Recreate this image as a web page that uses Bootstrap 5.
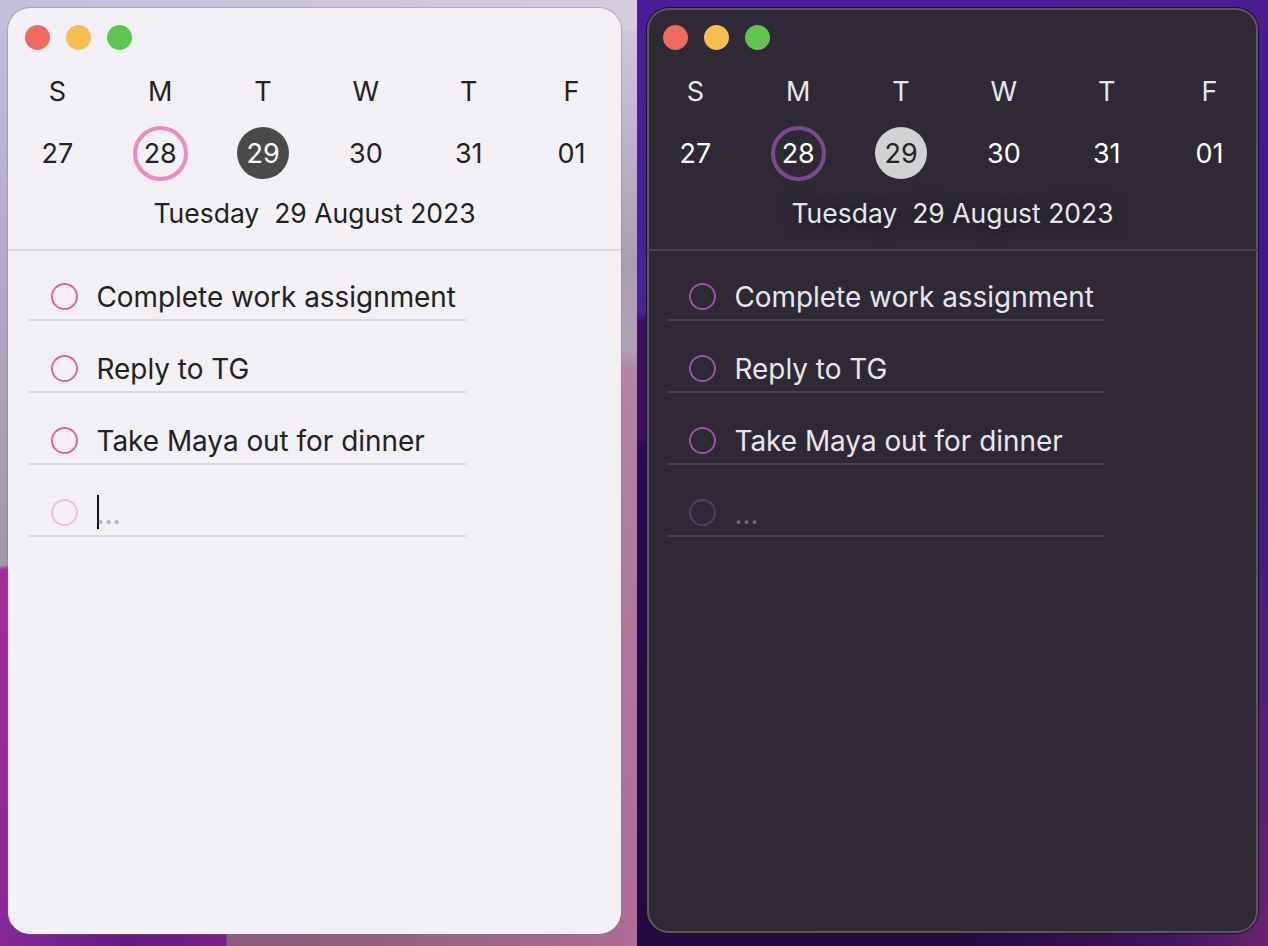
<!DOCTYPE html>
<html lang="en">
<head>
<meta charset="UTF-8">
<title>Calendar tasks</title>
<link href="https://cdn.jsdelivr.net/npm/bootstrap@5.3.0/dist/css/bootstrap.min.css" rel="stylesheet">
<style>
html, body { height: 100%; }
body { font-family: Inter, "Liberation Sans", sans-serif; background: #2a0f58; overflow: hidden; }
.stage { height: 946px; }
.pane { height: 946px; background-repeat: no-repeat; }
.pane-light {
    width: 637px;
    padding: 8px 16px 12px 8px;
    background-image:
        linear-gradient(90deg, #c2bfd9, #d6ccde),
        linear-gradient(90deg, #86289a 0%, #641a80 20%, #6e1c84 28%, #7c2088 35.5%, #8a5c80 35.6%, #93607f 60%, #b06a98 100%),
        linear-gradient(172deg, #c2bfd9 0%, #b3a9c4 30%, #a595a9 58%, #a595a9 59.5%, #a32c96 60%, #9a2a9c 75%, #86289a 100%),
        linear-gradient(180deg, #d6ccde 0%, #aa9db2 28%, #b2a0b8 37%, #b583a4 39%, #ae7aa0 60%, #b06a98 100%);
    background-size: 100% 30px, 100% 30px, 30px 100%, 30px 100%;
    background-position: 0 0, 0 bottom, 0 0, right 0 top 0;
}
.pane-dark {
    width: 631px;
    padding: 8px 10px 13px 10px;
    background-image:
        linear-gradient(90deg, #4a1c9c, #4a1c98 60%, #4a1c90),
        linear-gradient(90deg, #26093f 0%, #23093f 50%, #40155f 85%, #6a2270 100%),
        linear-gradient(180deg, #4a1c9c 0%, #4a2390 33%, #3e1064 34%, #3c0f60 46%, #2a0a50 48%, #26093f 100%),
        linear-gradient(180deg, #47199a 0%, #3e1a88 45%, #4a1f7c 70%, #6a2270 100%);
    background-size: 100% 30px, 100% 30px, 30px 100%, 30px 100%;
    background-position: 0 0, 0 bottom, 0 0, right 0 top 0;
}
.win { height: 100%; border-radius: 22px; display: flex; flex-direction: column; overflow: hidden; }
.win-light { background: #f2f0f4; color: #222; box-shadow: 0 0 0 1px rgba(120,110,130,.35); }
.win-dark { background: #2e2935; color: #e8e6ea; box-shadow: inset 0 0 0 2px #5a5760, 0 0 0 1px #1a1420; }
.lights { padding: 17px 17px 0; }
.win-dark .lights { padding-left: 16px; }
.tl { width: 25px; height: 25px; border-radius: 50%; }
.tl-r { background: #ee6a5f; }
.tl-y { background: #f5bf4f; }
.tl-g { background: #61c554; }
.wk { margin: 24px -2px 0; font-size: 27px; line-height: 36px; }
.dt { margin: 15px -2px 0; font-size: 27px; line-height: 54px; height: 56px; }
.win-dark .wk { margin: 24px -3px 0; }
.win-dark .dt { margin: 15px -3px 0; color: #fff; }
.dt .col > div { padding-top: 2px; }
.dy { width: 55px; height: 55px; border-radius: 50%; }
.dy-ring-l { border: 4px solid #ec8bbd; }
.dy-ring-d { border: 4px solid #7a4a8c; color: #fff; }
.dy-sel-l { width: 52px; height: 52px; background: #4a4a4a; color: #fff; }
.dy-sel-d { width: 52px; height: 52px; background: #d2d2d4; color: #222; }
.datel { margin-top: 14px; font-size: 26.5px; line-height: 36px; padding-bottom: 18px; }
.win-light .datel { text-shadow: 0 2px 14px rgba(255,255,255,.6); }
.win-dark .datel { text-shadow: 0 2px 14px rgba(0,0,0,.55); }
.hr-l { border-bottom: 2px solid #dcdadf; }
.hr-d { border-bottom: 2px solid #47434d; }
.tasks { padding: 0 0 0 21px; }
.win-dark .tasks { padding-left: 20px; }
.tk { width: 437px; height: 72px; display: flex; align-items: center; padding: 24px 0 0 22px; gap: 18.5px; border-bottom: 2px solid #dcdadf; font-size: 27.9px; white-space: nowrap; }
.tk:first-child { height: 70px; padding-top: 22px; }
.win-dark .tk { border-bottom-color: #47434d; }
.tk-c { width: 27px; height: 27px; border-radius: 50%; flex: none; border: 2.5px solid #e85fa5; }
.win-dark .tk-c { border-color: #9a54a8; }
.tk-new .tk-c { border-color: #f3bcd8; }
.win-dark .tk-new .tk-c { border-color: #5a3a68; }
.tk-t { padding-top: 4px; }
.tk-ph { color: #b5b3b8; padding-top: 6px; }
.win-dark .tk-ph { color: #6c6872; }
.caret-bar { width: 2px; height: 34px; background: #111; margin-right: -2px; }
</style>
</head>
<body>
<div class="stage d-flex">

    <div class="pane pane-light">
        <div class="win win-light">
            <div class="lights d-flex gap-3">
                <div class="tl tl-r"></div><div class="tl tl-y"></div><div class="tl tl-g"></div>
            </div>
            <div class="hr-l">
                <div class="row g-0 text-center wk">
                    <div class="col">S</div><div class="col">M</div><div class="col">T</div>
                    <div class="col">W</div><div class="col">T</div><div class="col">F</div>
                </div>
                <div class="row g-0 text-center dt">
                    <div class="col d-flex justify-content-center align-items-center"><div>27</div></div>
                    <div class="col d-flex justify-content-center align-items-center"><div class="dy dy-ring-l d-flex justify-content-center align-items-center">28</div></div>
                    <div class="col d-flex justify-content-center align-items-center"><div class="dy dy-sel-l d-flex justify-content-center align-items-center">29</div></div>
                    <div class="col d-flex justify-content-center align-items-center"><div>30</div></div>
                    <div class="col d-flex justify-content-center align-items-center"><div>31</div></div>
                    <div class="col d-flex justify-content-center align-items-center"><div>01</div></div>
                </div>
                <div class="datel text-center">Tuesday&nbsp;&nbsp;29 August 2023</div>
            </div>
            <div class="tasks">
                <div class="tk"><span class="tk-c"></span><span class="tk-t">Complete work assignment</span></div>
                <div class="tk"><span class="tk-c"></span><span class="tk-t">Reply to TG</span></div>
                <div class="tk"><span class="tk-c"></span><span class="tk-t">Take Maya out for dinner</span></div>
                <div class="tk tk-new"><span class="tk-c"></span><span class="d-flex align-items-center"><span class="caret-bar"></span><span class="tk-ph">...</span></span></div>
            </div>
        </div>
    </div>

    <div class="pane pane-dark">
        <div class="win win-dark">
            <div class="lights d-flex gap-3">
                <div class="tl tl-r"></div><div class="tl tl-y"></div><div class="tl tl-g"></div>
            </div>
            <div class="hr-d">
                <div class="row g-0 text-center wk">
                    <div class="col">S</div><div class="col">M</div><div class="col">T</div>
                    <div class="col">W</div><div class="col">T</div><div class="col">F</div>
                </div>
                <div class="row g-0 text-center dt">
                    <div class="col d-flex justify-content-center align-items-center"><div>27</div></div>
                    <div class="col d-flex justify-content-center align-items-center"><div class="dy dy-ring-d d-flex justify-content-center align-items-center">28</div></div>
                    <div class="col d-flex justify-content-center align-items-center"><div class="dy dy-sel-d d-flex justify-content-center align-items-center">29</div></div>
                    <div class="col d-flex justify-content-center align-items-center"><div>30</div></div>
                    <div class="col d-flex justify-content-center align-items-center"><div>31</div></div>
                    <div class="col d-flex justify-content-center align-items-center"><div>01</div></div>
                </div>
                <div class="datel text-center">Tuesday&nbsp;&nbsp;29 August 2023</div>
            </div>
            <div class="tasks">
                <div class="tk"><span class="tk-c"></span><span class="tk-t">Complete work assignment</span></div>
                <div class="tk"><span class="tk-c"></span><span class="tk-t">Reply to TG</span></div>
                <div class="tk"><span class="tk-c"></span><span class="tk-t">Take Maya out for dinner</span></div>
                <div class="tk tk-new"><span class="tk-c"></span><span class="tk-ph">...</span></div>
            </div>
        </div>
    </div>

</div>
<script src="https://cdn.jsdelivr.net/npm/bootstrap@5.3.0/dist/js/bootstrap.bundle.min.js"></script>
</body>
</html>
